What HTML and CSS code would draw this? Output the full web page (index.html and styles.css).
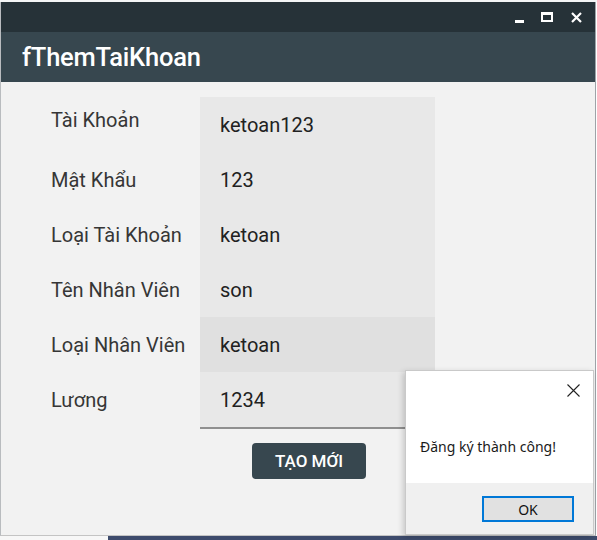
FILE: index.html
```html
<!DOCTYPE html>
<html>
<head>
<meta charset="utf-8">
<link rel="stylesheet" href="styles.css">
</head>
<body>
<div class="screen">
  <div class="top-strip"></div>
  <div class="window">
    <div class="titlebar">
      <span class="ctl ctl-min"></span>
      <span class="ctl ctl-max"></span>
      <svg class="ctl-close" width="11" height="11" viewBox="0 0 11 11"><path d="M1 1L10 10M10 1L1 10" stroke="#fff" stroke-width="2.2"/></svg>
    </div>
    <div class="header">fThemTaiKhoan</div>
    <div class="body">
      <div class="form">
        <div class="labels">
          <div class="label first">Tài Khoản</div>
          <div class="label">Mật Khẩu</div>
          <div class="label">Loại Tài Khoản</div>
          <div class="label">Tên Nhân Viên</div>
          <div class="label">Loại Nhân Viên</div>
          <div class="label">Lương</div>
        </div>
        <div class="fields">
          <div class="field">ketoan123</div>
          <div class="field">123</div>
          <div class="field">ketoan</div>
          <div class="field">son</div>
          <div class="field hover">ketoan</div>
          <div class="field">1234</div>
        </div>
      </div>
      <div class="actions">
        <button class="btn">TẠO MỚI</button>
      </div>
    </div>
  </div>
  <div class="bottom-strip">
    <div class="bs-light"></div>
    <div class="bs-dark"></div>
  </div>

  <div class="dialog">
    <div class="dlg-top">
      <svg class="dlg-close" width="13" height="13" viewBox="0 0 13 13"><path d="M0.5 0.5L12.5 12.5M12.5 0.5L0.5 12.5" stroke="#222" stroke-width="1.1"/></svg>
      <div class="dlg-msg">Đăng ký thành công!</div>
    </div>
    <div class="dlg-bottom">
      <button class="ok">OK</button>
    </div>
  </div>
</div>
</body>
</html>
```

FILE: styles.css
```css
html, body {
  margin: 0;
  padding: 0;
  background: #ffffff;
}
.screen {
  position: relative;
  width: 597px;
  height: 540px;
  overflow: hidden;
  display: flex;
  flex-direction: column;
  font-family: Roboto, "Liberation Sans", sans-serif;
}
.top-strip {
  height: 2px;
  background: #f4f5f6;
}
.window {
  margin-left: 0;
  width: 594px;
  border-left: 1px solid #b9bcbf;
  border-right: 1px solid #9ea3a8;
  border-bottom: 1px solid #c4c4c4;
  display: flex;
  flex-direction: column;
}
.titlebar {
  height: 30px;
  background: #263238;
  display: flex;
  align-items: center;
  justify-content: flex-end;
  padding-right: 13px;
  gap: 0;
}
.ctl {
  display: block;
  box-sizing: border-box;
}
.ctl-min {
  width: 9px;
  height: 3px;
  background: #fff;
  margin-top: 9px;
  margin-right: 17px;
}
.ctl-max {
  width: 12px;
  height: 10px;
  border: 2px solid #fff;
  border-top-width: 3px;
  margin-right: 18px;
}
.ctl-close {
  display: block;
}
.header {
  height: 50px;
  background: #37474f;
  color: #ffffff;
  font-size: 25.5px;
  font-weight: 500;
  line-height: 50px;
  padding-left: 21px;
  letter-spacing: -0.2px;
}
.body {
  height: 453px;
  background: #f2f2f2;
  padding-top: 15px;
  box-sizing: border-box;
}
.form {
  display: flex;
  padding-left: 50px;
}
.labels {
  width: 149px;
  display: flex;
  flex-direction: column;
}
.label {
  height: 55px;
  display: flex;
  align-items: center;
  padding-top: 1px;
  box-sizing: border-box;
  font-size: 20px;
  color: #363636;
}
.label.first {
  padding-top: 0;
  padding-bottom: 9px;
}
.fields {
  width: 235px;
  background: #e8e8e8;
  border-bottom: 2px solid #8f8f8f;
  display: flex;
  flex-direction: column;
}
.field {
  height: 55px;
  display: flex;
  align-items: center;
  padding-left: 20px;
  font-size: 20px;
  color: #212121;
}
.field.hover {
  background: #e0e0e0;
}
.actions {
  padding-left: 251px;
  padding-top: 14px;
}
.btn {
  width: 114px;
  height: 36px;
  background: #37474f;
  color: #ffffff;
  border: none;
  border-radius: 4px;
  font-family: Roboto, sans-serif;
  font-weight: 500;
  font-size: 17px;
  padding: 0;
}
.bottom-strip {
  flex: 1;
  display: flex;
}
.bs-light {
  width: 108px;
  background: #f7f7f7;
}
.bs-dark {
  flex: 1;
  background: #3d4b6c;
}
.dialog {
  position: absolute;
  left: 405px;
  top: 370px;
  width: 189px;
  height: 165px;
  border: 1px solid #c9c9c9;
  box-sizing: border-box;
  box-shadow: -2px 2px 6px rgba(0,0,0,0.18);
  display: flex;
  flex-direction: column;
  font-family: "Noto Sans", "Open Sans", sans-serif;
}
.dlg-top {
  position: relative;
  height: 112px;
  background: #ffffff;
}
.dlg-close {
  position: absolute;
  left: 161px;
  top: 13px;
}
.dlg-msg {
  position: absolute;
  left: 14px;
  top: 66px;
  font-size: 14px;
  color: #1a1a1a;
}
.dlg-bottom {
  flex: 1;
  background: #f0f0f0;
  display: flex;
  justify-content: flex-end;
  align-items: flex-start;
  padding-top: 13px;
  padding-right: 19px;
}
.ok {
  width: 92px;
  height: 26px;
  border: 2px solid #0078d7;
  background: #e1e1e1;
  box-shadow: inset 0 0 0 1px #e1e1e1;
  font-family: "Noto Sans", "Open Sans", sans-serif;
  font-size: 14px;
  color: #111;
  padding: 0;
}
```
